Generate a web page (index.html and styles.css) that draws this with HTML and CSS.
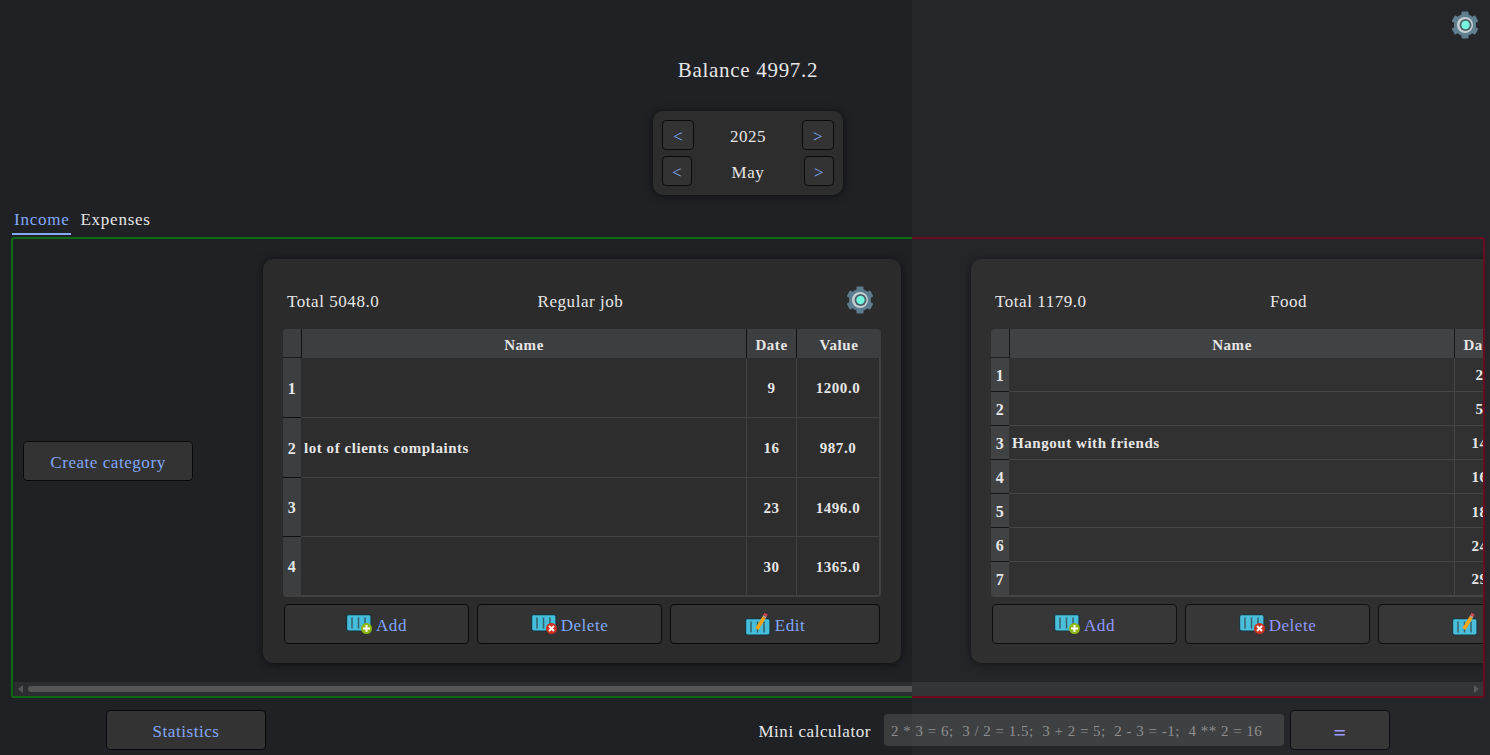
FILE: index.html
```html
<!DOCTYPE html>
<html lang="en">
<head>
  <meta charset="UTF-8">
  <title>Budget</title>
  <link rel="stylesheet" href="styles.css">
</head>
<body>
  <svg class="sprites" width="0" height="0">
    <symbol id="gear" viewBox="0 0 28 28">
      <g fill="#5d7d8e">
        <circle cx="14" cy="14" r="11"/>
        <rect id="tooth" x="10.500" y="0.500" width="7" height="6" rx="1"/>
        <use href="#tooth" transform="rotate(60 14 14)"/>
        <use href="#tooth" transform="rotate(120 14 14)"/>
        <use href="#tooth" transform="rotate(180 14 14)"/>
        <use href="#tooth" transform="rotate(240 14 14)"/>
        <use href="#tooth" transform="rotate(300 14 14)"/>
      </g>
      <circle cx="14" cy="14" r="8" fill="#c4d0d4"/>
      <circle cx="14.500" cy="14" r="6" fill="#4a5d68"/>
      <circle cx="14.500" cy="14" r="4.200" fill="#72f5dc"/>
    </symbol>
    <symbol id="sheet" viewBox="0 0 26 18">
      <rect x="0.600" y="0.600" width="24.400" height="16.400" rx="2" fill="#45bedb" stroke="#17333c" stroke-width="1.200"/>
      <path stroke="#35606c" stroke-width="1.500" d="M6 3.500v11M12.500 3.500v11M19 3.500v11"/>
    </symbol>
    <symbol id="icon-add" viewBox="0 0 30 22">
      <use href="#sheet" x="2" y="1" width="26" height="18"/>
      <circle cx="22.500" cy="15.500" r="5.500" fill="#8db510"/>
      <path stroke="#fff" stroke-width="2" d="M22.500 12v7M19 15.500h7"/>
    </symbol>
    <symbol id="icon-delete" viewBox="0 0 30 22">
      <use href="#sheet" x="2" y="1" width="26" height="18"/>
      <circle cx="22.500" cy="15.500" r="5.500" fill="#cc2f1c"/>
      <path stroke="#fff" stroke-width="2" d="M20 13l5 5M25 13l-5 5"/>
    </symbol>
    <symbol id="icon-edit" viewBox="0 0 30 26">
      <use href="#sheet" x="2" y="8" width="26" height="18"/>
      <path stroke="#f5a40f" stroke-width="3.600" d="M14 19l7-11.500"/>
      <path stroke="#b9a08f" stroke-width="3.600" d="M21 7.500l1-1.700"/>
      <path stroke="#d8434e" stroke-width="3.600" d="M22 5.800l1.200-2"/>
    </symbol>
  </svg>

  <div class="app">
    <header class="header">
      <svg class="gear gear-top"><use href="#gear"/></svg>
      <div class="balance">Balance 4997.2</div>
      <div class="period">
        <div class="period-row">
          <button class="btn period-btn-wide">&lt;</button>
          <span>2025</span>
          <button class="btn period-btn-wide">&gt;</button>
        </div>
        <div class="period-row">
          <button class="btn period-btn">&lt;</button>
          <span>May</span>
          <button class="btn period-btn">&gt;</button>
        </div>
      </div>
    </header>

    <nav class="tabs">
      <div class="tab active">Income</div>
      <div class="tab">Expenses</div>
    </nav>

    <main class="frame">
      <section class="pane pane-income">
        <div class="pane-content">
          <button class="btn create-btn">Create category</button>
          <div class="card">
            <div class="card-head">
              <span>Total 5048.0</span>
              <span>Regular job</span>
              <svg class="gear"><use href="#gear"/></svg>
            </div>
            <div class="table-wrap">
              <table class="records rows-4">
                <thead>
                  <tr><th class="num"></th><th class="col-name">Name</th><th class="col-date">Date</th><th class="col-value">Value</th></tr>
                </thead>
                <tbody>
                  <tr><th class="num">1</th><td class="name"></td><td>9</td><td>1200.0</td></tr>
                  <tr><th class="num">2</th><td class="name">lot of clients complaints</td><td>16</td><td>987.0</td></tr>
                  <tr><th class="num">3</th><td class="name"></td><td>23</td><td>1496.0</td></tr>
                  <tr><th class="num">4</th><td class="name"></td><td>30</td><td>1365.0</td></tr>
                </tbody>
              </table>
            </div>
            <div class="card-actions">
              <button class="btn action"><svg class="icon"><use href="#icon-add"/></svg>Add</button>
              <button class="btn action"><svg class="icon"><use href="#icon-delete"/></svg>Delete</button>
              <button class="btn action action-edit"><svg class="icon icon-tall"><use href="#icon-edit"/></svg>Edit</button>
            </div>
          </div>
        </div>
        <div class="scrollbar">
          <span class="arrow arrow-left"></span>
          <span class="thumb"></span>
        </div>
      </section>

      <section class="pane pane-expenses">
        <div class="pane-content">
          <div class="card">
            <div class="card-head">
              <span>Total 1179.0</span>
              <span>Food</span>
              <svg class="gear"><use href="#gear"/></svg>
            </div>
            <div class="table-wrap">
              <table class="records rows-7">
                <thead>
                  <tr><th class="num"></th><th class="col-name">Name</th><th class="col-date">Date</th><th class="col-value"></th></tr>
                </thead>
                <tbody>
                  <tr><th class="num">1</th><td class="name"></td><td>2</td><td></td></tr>
                  <tr><th class="num">2</th><td class="name"></td><td>5</td><td></td></tr>
                  <tr><th class="num">3</th><td class="name">Hangout with friends</td><td>14</td><td></td></tr>
                  <tr><th class="num">4</th><td class="name"></td><td>16</td><td></td></tr>
                  <tr><th class="num">5</th><td class="name"></td><td>18</td><td></td></tr>
                  <tr><th class="num">6</th><td class="name"></td><td>24</td><td></td></tr>
                  <tr><th class="num">7</th><td class="name"></td><td>29</td><td></td></tr>
                </tbody>
              </table>
            </div>
            <div class="card-actions">
              <button class="btn action"><svg class="icon"><use href="#icon-add"/></svg>Add</button>
              <button class="btn action"><svg class="icon"><use href="#icon-delete"/></svg>Delete</button>
              <button class="btn action action-edit"><svg class="icon icon-tall"><use href="#icon-edit"/></svg></button>
            </div>
          </div>
        </div>
        <div class="scrollbar">
          <span class="arrow arrow-right"></span>
        </div>
      </section>
    </main>

    <footer class="footer">
      <button class="btn stats-btn">Statistics</button>
      <label class="calc-label" for="calc">Mini calculator</label>
      <input id="calc" class="calc-input" type="text" placeholder="2 * 3 = 6;  3 / 2 = 1.5;  3 + 2 = 5;  2 - 3 = -1;  4 ** 2 = 16">
      <button class="btn equals-btn">=</button>
    </footer>
  </div>

  <div class="wipe"></div>
</body>
</html>
```

FILE: styles.css
```css
body {
  margin: 0;
  height: 755px;
  overflow: hidden;
  background: #202125;
  color: #e6e6e6;
  font-family: "Liberation Serif", serif;
  font-size: 17px;
  letter-spacing: 0.55px;
}
.sprites {
  position: absolute;
}
.app {
  display: flex;
  flex-direction: column;
  height: 755px;
}

.wipe {
  position: absolute;
  top: 0;
  left: 912px;
  right: 0;
  bottom: 0;
  background: rgba(255, 255, 255, 0.022);
  pointer-events: none;
}

.btn {
  background: #333333;
  border: 1px solid #0a0a0a;
  border-radius: 4px;
  color: #82a8f8;
  font-family: inherit;
  font-size: 17px;
  letter-spacing: inherit;
  padding: 4px 0 0;
}

.header {
  display: flex;
  flex-direction: column;
  align-items: center;
  padding-left: 6px;
  height: 208px;
}
.gear {
  width: 28px;
  height: 28px;
}
.gear-top {
  align-self: flex-end;
  margin: 11px 11px 0 0;
}
.balance {
  margin-top: 19px;
  font-size: 21px;
  letter-spacing: 0.7px;
  line-height: 24px;
}
.period {
  display: flex;
  flex-direction: column;
  gap: 6px;
  box-sizing: border-box;
  width: 190px;
  height: 84px;
  margin-top: 29px;
  padding: 9px;
  background: #2d2d2d;
  border-radius: 10px;
  box-shadow: 0 1px 8px rgba(0, 0, 0, 0.6);
}
.period-row {
  display: flex;
  align-items: center;
  justify-content: space-between;
  height: 30px;
}
.period-row span {
  padding-top: 4px;
}
.period-btn-wide {
  width: 32px;
  height: 30px;
}
.period-btn {
  width: 30px;
  height: 30px;
}

.tabs {
  display: flex;
  gap: 7px;
  height: 27px;
  margin-left: 12px;
}
.tab {
  padding: 0 2px;
  height: 25px;
  line-height: 24px;
  letter-spacing: 0.75px;
}
.tab.active {
  color: #82a8f8;
  border-bottom: 2px solid #82a8f8;
}

.frame {
  display: flex;
  height: 461px;
  margin: 2px 5px 0 11px;
}
.pane {
  display: flex;
  flex-direction: column;
  box-sizing: border-box;
}
.pane-income {
  width: 901px;
  border: solid #0f6a14;
  border-width: 2px 0 2px 2px;
  border-radius: 3px 0 0 3px;
}
.pane-expenses {
  flex: 1;
  min-width: 0;
  border: solid #6a0419;
  border-width: 2px 2px 2px 0;
  border-radius: 0 3px 3px 0;
}
.pane-expenses .btn {
  color: #8f96fa;
}
.pane-content {
  display: flex;
  align-items: center;
  flex: 1;
  min-height: 0;
  overflow: hidden;
  padding-left: 10px;
}
.pane-expenses .pane-content {
  padding-left: 59px;
}
.create-btn {
  flex: none;
  width: 170px;
  height: 40px;
  margin-right: 70px;
}

.card {
  flex: none;
  box-sizing: border-box;
  width: 638px;
  height: 404px;
  padding: 20px 20px 19px;
  background: #2b2b2b;
  border-radius: 10px;
  box-shadow: 0 1px 10px rgba(0, 0, 0, 0.6);
}
.card-head {
  display: grid;
  grid-template-columns: 1fr auto 1fr;
  align-items: center;
  height: 42px;
  margin-bottom: 8px;
  padding: 0 7px 0 4px;
}
.card-head span {
  padding-top: 4px;
}
.card-head .gear {
  justify-self: end;
}

.table-wrap {
  height: 268px;
  border-radius: 4px;
  overflow: hidden;
  background: #2d2d2d;
}
.records {
  width: 598px;
  height: 268px;
  table-layout: fixed;
  border-collapse: separate;
  border-spacing: 0;
  font-size: 15px;
  font-weight: bold;
}
.records th,
.records td {
  box-sizing: border-box;
  padding: 3px 0 0;
}
.records thead th {
  height: 29px;
  padding-top: 4px;
  background: #3d3e40;
  border-left: 1px solid #111111;
}
.records thead th.num {
  border-left: none;
  border-bottom: 1px solid #1c1c1c;
}
.num {
  width: 18px;
  font-size: 16px;
}
.col-name {
  width: 445px;
}
.col-date {
  width: 50px;
}
.col-value {
  width: 85px;
}
.records tbody th {
  background: #3d3e40;
  border-bottom: 1px solid #111111;
}
.records td {
  text-align: center;
  border-left: 1px solid #414141;
  border-bottom: 1px solid #414141;
  white-space: nowrap;
  overflow: hidden;
}
.records td.name {
  border-left: none;
  padding-left: 3px;
  text-align: left;
}
.records td:last-child {
  border-right: 2px solid #414141;
}
.records tbody tr:last-child td,
.records tbody tr:last-child th {
  border-bottom: 2px solid #414141;
}
.rows-4 tbody tr {
  height: 60px;
}
.rows-4 tbody tr:nth-child(3) {
  height: 59px;
}
.rows-7 tbody tr {
  height: 34.140px;
}

.card-actions {
  display: flex;
  gap: 8px;
  margin: 7px 1px 0;
}
.action {
  display: flex;
  align-items: center;
  justify-content: center;
  gap: 2px;
  flex: none;
  width: 185px;
  height: 40px;
  padding-right: 2px;
}
.action-edit {
  width: 210px;
}
.pane-expenses .action-edit {
  justify-content: flex-start;
  padding-left: 71px;
}
.icon {
  width: 30px;
  height: 22px;
  margin-top: -3px;
}
.icon-tall {
  height: 26px;
  margin-top: -5px;
}

.scrollbar {
  display: flex;
  align-items: center;
  flex: none;
  height: 14px;
  margin-left: 1px;
  background: #2c2d30;
}
.pane-expenses .scrollbar {
  justify-content: flex-end;
  margin-left: 0;
  background: #303135;
}
.thumb {
  flex: 1;
  height: 6px;
  margin-left: 5px;
  background: #555555;
  border-radius: 3px 0 0 3px;
}
.arrow {
  width: 0;
  height: 0;
  border-top: 4px solid transparent;
  border-bottom: 4px solid transparent;
}
.arrow-left {
  margin-left: 4px;
  border-right: 5px solid #555555;
}
.arrow-right {
  margin-right: 4px;
  border-left: 5px solid #555555;
}

.footer {
  display: flex;
  align-items: center;
  height: 40px;
  margin: 12px 100px 0 106px;
}
.stats-btn {
  width: 160px;
  height: 40px;
}
.calc-label {
  margin-left: auto;
  padding-top: 4px;
}
.calc-input {
  box-sizing: border-box;
  width: 400px;
  height: 32px;
  margin: 0 6px 0 13px;
  padding: 3px 7px 0;
  background: #3b3c3e;
  border: none;
  border-radius: 4px;
  font-family: inherit;
  font-size: 15px;
  letter-spacing: 0.5px;
}
.calc-input::placeholder {
  color: #8c8c8c;
  opacity: 1;
}
.equals-btn {
  width: 100px;
  height: 40px;
  padding-top: 5px;
  color: #9a9cff;
  font-size: 22px;
  font-weight: bold;
}
```
